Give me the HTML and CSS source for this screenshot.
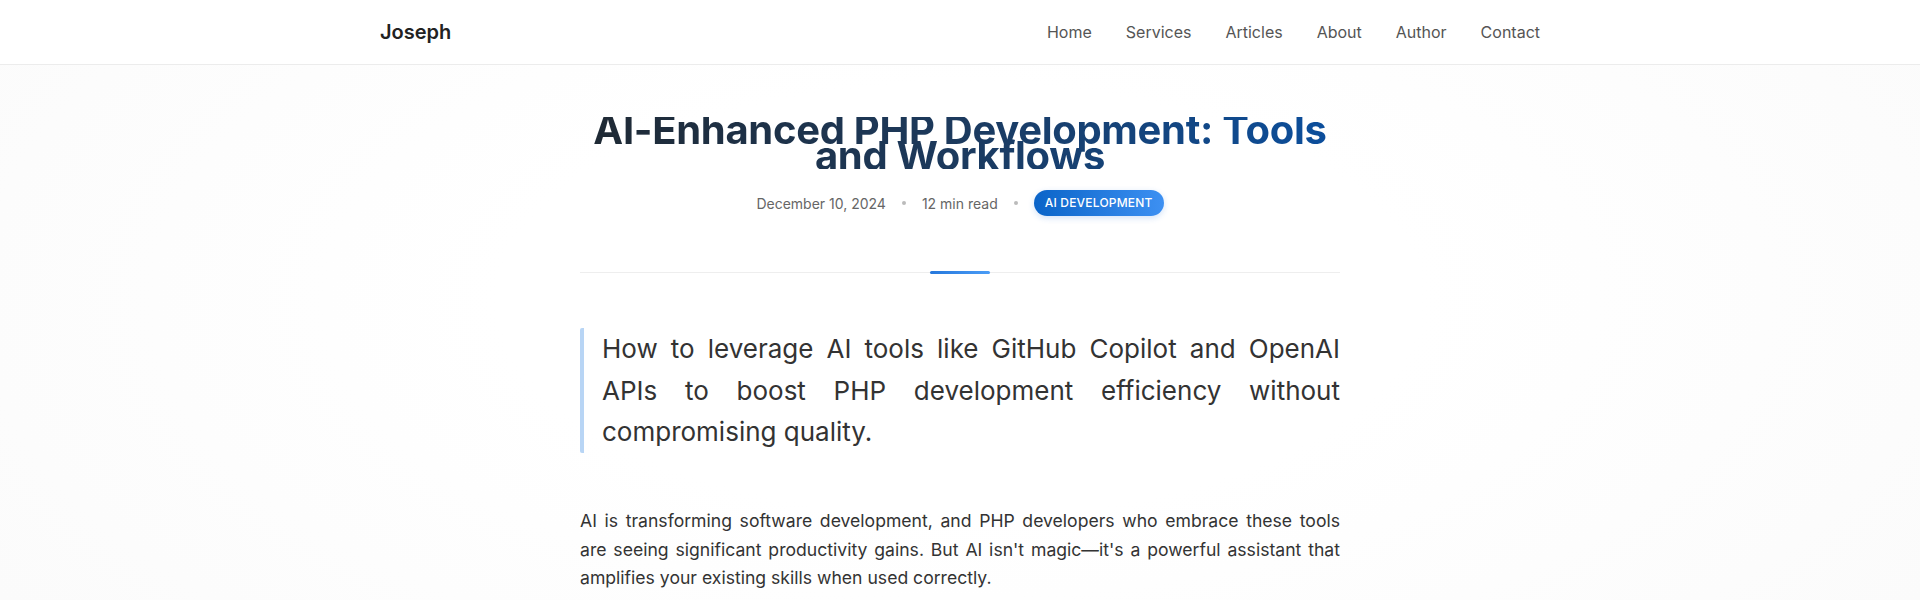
FILE: index.html
```html
<!DOCTYPE html>
<html lang="en">
<head>
<meta charset="utf-8">
<title>AI-Enhanced PHP Development: Tools and Workflows</title>
<link rel="stylesheet" href="styles.css">
</head>
<body>
<header class="site-header">
  <div class="container header-inner">
    <a class="logo" href="#">Joseph</a>
    <nav class="nav">
      <a href="#">Home</a>
      <a href="#">Services</a>
      <a href="#">Articles</a>
      <a href="#">About</a>
      <a href="#">Author</a>
      <a href="#">Contact</a>
    </nav>
  </div>
</header>
<main class="main">
  <article class="article">
    <div class="article-header">
      <h1 class="title">AI-Enhanced PHP Development: Tools and Workflows</h1>
      <div class="meta">
        <span>December 10, 2024</span>
        <span class="dot"></span>
        <span>12 min read</span>
        <span class="dot"></span>
        <span class="badge">AI Development</span>
      </div>
    </div>
    <blockquote class="lead">How to leverage AI tools like GitHub Copilot and OpenAI APIs to boost PHP development efficiency without compromising quality.</blockquote>
    <p class="body-text">AI is transforming software development, and PHP developers who embrace these tools are seeing significant productivity gains. But AI isn't magic—it's a powerful assistant that amplifies your existing skills when used correctly.</p>
  </article>
</main>
</body>
</html>
```
FILE: styles.css
```css
* { box-sizing: border-box; }
html, body { margin: 0; padding: 0; }
body {
  font-family: Inter, "Noto Sans", sans-serif;
  color: #333;
  background: radial-gradient(ellipse 60% 90% at 50% 50%, #ffffff 40%, #fbfbfb 100%);
  min-height: 600px;
}
a { text-decoration: none; }
.site-header {
  background: #fff;
  border-bottom: 1px solid #ececec;
}
.container {
  max-width: 1200px;
  margin: 0 auto;
  padding: 0 20px;
}
.header-inner {
  height: 64px;
  display: flex;
  align-items: center;
  justify-content: space-between;
}
.logo {
  font-size: 20px;
  font-weight: 600;
  color: #222;
}
.nav {
  display: flex;
  gap: 34px;
}
.nav a {
  font-size: 16px;
  font-weight: 400;
  color: #555;
}
.main {
  padding-top: 52px;
}
.article {
  max-width: 760px;
  margin: 0 auto;
}
.article-header {
  position: relative;
  text-align: center;
  padding-bottom: 56px;
  border-bottom: 1px solid #eeeeee;
}
.article-header::after {
  content: "";
  position: absolute;
  left: 50%;
  bottom: -2px;
  width: 60px;
  height: 3px;
  margin-left: -30px;
  border-radius: 2px;
  background: linear-gradient(90deg, #2678dc, #4a9cf6);
}
.title {
  margin: 0 0 21px;
  font-size: 40px;
  font-weight: 700;
  line-height: 26px;
  letter-spacing: -0.3px;
  background: linear-gradient(90deg, #1f2933 0%, #1c3a5e 50%, #0b4f9e 100%);
  -webkit-background-clip: text;
  background-clip: text;
  color: transparent;
}
.meta {
  display: flex;
  justify-content: center;
  align-items: center;
  gap: 16px;
  font-size: 14px;
  color: #666;
}
.dot {
  width: 4px;
  height: 4px;
  border-radius: 50%;
  background: #bbb;
}
.badge {
  display: inline-block;
  height: 26px;
  line-height: 26px;
  padding: 0 11px;
  border-radius: 13px;
  background: linear-gradient(90deg, #0a64c8, #3d90f2);
  color: #fff;
  font-size: 12px;
  font-weight: 500;
  text-transform: uppercase;
  letter-spacing: 0.2px;
  box-shadow: 0 2px 6px rgba(30, 110, 220, 0.2);
}
.lead {
  margin: 55px 0 54px;
  padding: 0 0 0 18px;
  border-left: 4px solid #b8d5f5;
  border-radius: 2px;
  font-size: 26px;
  line-height: 1.6;
  font-weight: 400;
  color: #333;
  text-align: justify;
}
.body-text {
  margin: 0;
  font-size: 17.6px;
  line-height: 28.8px;
  color: #333;
  text-align: justify;
}
```
